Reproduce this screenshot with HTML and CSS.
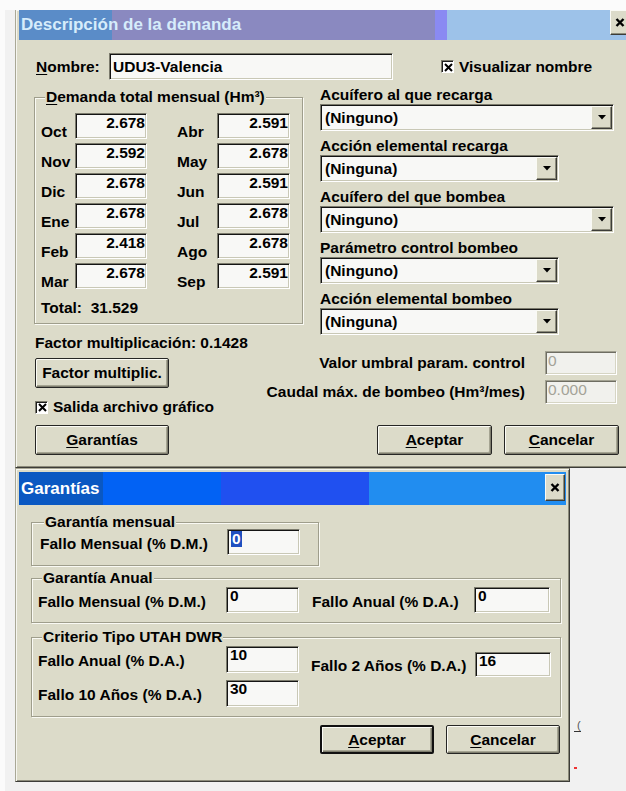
FILE: index.html
```html
<!DOCTYPE html>
<html lang="es">
<head>
<meta charset="utf-8">
<title>Descripción de la demanda</title>
<link rel="stylesheet" href="styles.css">
</head>
<body>
<div class="desk">

  <section class="dlg dlg-main">
    <header class="title title-main">
      <span class="title-text">Descripción de la demanda</span>
      <span class="close"><svg width="10" height="9" viewBox="0 0 10 9"><path d="M1.5 1L8.5 8M8.5 1L1.5 8" stroke="#000" stroke-width="2.4"/></svg></span>
    </header>

    <div class="main-body">
      <div class="name-row">
        <span class="name-lbl"><u>N</u>ombre:</span>
        <span class="field name-field">UDU3-Valencia</span>
        <span class="check check-name">
          <span class="box"><svg width="9" height="9" viewBox="0 0 9 9"><path d="M1 1L8 8M8 1L1 8" stroke="#000" stroke-width="2"/></svg></span>
          <span>Visualizar nombre</span>
        </span>
      </div>

      <div class="mid">
        <div class="group months">
          <span class="group-title"><u>D</u>emanda total mensual (Hm³)</span>
          <div class="month-grid">
            <span class="m">Oct</span><span class="field num">2.678</span><span class="m r">Abr</span><span class="field num">2.591</span>
            <span class="m">Nov</span><span class="field num">2.592</span><span class="m r">May</span><span class="field num">2.678</span>
            <span class="m">Dic</span><span class="field num">2.678</span><span class="m r">Jun</span><span class="field num">2.591</span>
            <span class="m">Ene</span><span class="field num">2.678</span><span class="m r">Jul</span><span class="field num">2.678</span>
            <span class="m">Feb</span><span class="field num">2.418</span><span class="m r">Ago</span><span class="field num">2.678</span>
            <span class="m">Mar</span><span class="field num">2.678</span><span class="m r">Sep</span><span class="field num">2.591</span>
          </div>
          <div class="total">Total:&nbsp; 31.529</div>
        </div>

        <div class="combos">
          <div class="c-lbl">Acuífero al que recarga</div>
          <div class="combo wide"><span class="c-val">(Ninguno)</span><span class="drop"><svg width="8" height="5" viewBox="0 0 8 5"><path d="M0 0H8L4 4.5Z"/></svg></span></div>
          <div class="c-lbl">Acción elemental recarga</div>
          <div class="combo"><span class="c-val">(Ninguna)</span><span class="drop"><svg width="8" height="5" viewBox="0 0 8 5"><path d="M0 0H8L4 4.5Z"/></svg></span></div>
          <div class="c-lbl">Acuífero del que bombea</div>
          <div class="combo wide"><span class="c-val">(Ninguno)</span><span class="drop"><svg width="8" height="5" viewBox="0 0 8 5"><path d="M0 0H8L4 4.5Z"/></svg></span></div>
          <div class="c-lbl">Parámetro control bombeo</div>
          <div class="combo"><span class="c-val">(Ninguno)</span><span class="drop"><svg width="8" height="5" viewBox="0 0 8 5"><path d="M0 0H8L4 4.5Z"/></svg></span></div>
          <div class="c-lbl">Acción elemental bombeo</div>
          <div class="combo"><span class="c-val">(Ninguna)</span><span class="drop"><svg width="8" height="5" viewBox="0 0 8 5"><path d="M0 0H8L4 4.5Z"/></svg></span></div>
        </div>
      </div>

      <div class="lower">
        <div class="lower-left">
          <div class="factor-text">Factor multiplicación: 0.1428</div>
          <button class="btn btn-factor">Factor multiplic.</button>
          <span class="check check-out">
            <span class="box"><svg width="9" height="9" viewBox="0 0 9 9"><path d="M1 1L8 8M8 1L1 8" stroke="#000" stroke-width="2"/></svg></span>
            <span>Salida archivo gráfico</span>
          </span>
        </div>
        <div class="lower-right">
          <div class="pair pair-1"><span>Valor umbral param. control</span><span class="field dis">0</span></div>
          <div class="pair pair-2"><span>Caudal máx. de bombeo (Hm³/mes)</span><span class="field dis">0.000</span></div>
        </div>
      </div>

      <div class="actions">
        <button class="btn btn-gar"><u>G</u>arantías</button>
        <span class="spacer"></span>
        <button class="btn btn-ok"><u>A</u>ceptar</button>
        <button class="btn btn-cancel"><u>C</u>ancelar</button>
      </div>
    </div>
  </section>

  <section class="dlg dlg-gar">
    <header class="title title-gar">
      <span class="title-text">Garantías</span>
      <span class="close"><svg width="10" height="9" viewBox="0 0 10 9"><path d="M1.5 1L8.5 8M8.5 1L1.5 8" stroke="#000" stroke-width="2.4"/></svg></span>
    </header>

    <div class="gar-body">
      <div class="group g-month">
        <span class="group-title">Garantía mensual</span>
        <div class="g-row">
          <span class="g-lbl g-lbl-a">Fallo Mensual (% D.M.)</span>
          <span class="field g-field"><span class="sel">0</span></span>
        </div>
      </div>

      <div class="group g-year">
        <span class="group-title">Garantía Anual</span>
        <div class="g-row">
          <span class="g-lbl">Fallo Mensual (% D.M.)</span>
          <span class="field g-field">0</span>
          <span class="g-lbl g-lbl-r">Fallo Anual (% D.A.)</span>
          <span class="field g-field g-field-r">0</span>
        </div>
      </div>

      <div class="group g-utah">
        <span class="group-title">Criterio Tipo UTAH DWR</span>
        <div class="g-row g-row-top">
          <span class="g-pair">
            <span class="g-lbl">Fallo Anual (% D.A.)</span>
            <span class="field g-field g-tall">10</span>
          </span>
          <span class="g-pair g-pair-low">
            <span class="g-lbl g-lbl-r2">Fallo 2 Años (% D.A.)</span>
            <span class="field g-field g-field-r2">16</span>
          </span>
        </div>
        <div class="g-row g-row-2">
          <span class="g-lbl">Fallo 10 Años (% D.A.)</span>
          <span class="field g-field g-tall">30</span>
        </div>
      </div>

      <div class="gar-actions">
        <button class="btn btn-default"><u>A</u>ceptar</button>
        <button class="btn"><u>C</u>ancelar</button>
      </div>
    </div>
  </section>

  <span class="stray-mark">(</span>
  <span class="stray-dot"></span>
</div>
</body>
</html>
```
FILE: styles.css
```css
:root {
  --face: #dcdbc9;
  --shade: #9f9e8c;
  --field: #f8f8f6;
}

* { box-sizing: border-box; }

html, body { margin: 0; padding: 0; }

body {
  width: 626px;
  height: 791px;
  overflow: hidden;
  background: #fbfbfb;
  font: bold 15.5px/18px "Liberation Sans", Arial, sans-serif;
  color: #000;
}

u { text-decoration-thickness: 1px; text-underline-offset: 2px; }

/* grey desktop strip behind the dialogs */
.desk {
  position: relative;
  margin: 10px 0 0 5px;
  padding-left: 10px;
  height: 781px;
  background: #f1f1f1;
}

/* ---------- window frames ---------- */
.dlg {
  background: var(--face);
  padding: 3px;
  border: 1px solid #a9a896;
  border-right-color: #3c3c38;
  border-bottom-color: #3c3c38;
  box-shadow: inset 1px 1px 0 #f6f6f0, inset -1px -1px 0 #8c8b7a;
}

.dlg-main {
  width: 620px;
  padding-top: 0;
  border-top: 0;
}

.dlg-gar {
  width: 555px;
}

/* ---------- title bars ---------- */
.title {
  display: flex;
  align-items: flex-start;
  font-size: 17px;
  padding-left: 2px;
  white-space: nowrap;
}

.title-main {
  height: 30px;
  line-height: 30px;
  color: #d6ecfb;
  background: linear-gradient(to right,
    #5a8cc8 0 93px,
    #8a89c0 93px 416px,
    #8a8af2 416px 428px,
    #9dc2e9 428px);
}

.title-gar {
  height: 33px;
  line-height: 33px;
  color: #fff;
  background: linear-gradient(to right,
    #0a58c2 0 84px,
    #0262f4 84px 202px,
    #2050f0 202px 350px,
    #218df0 350px);
}

.title-text { flex: 1; }

.close {
  width: 20px;
  display: flex;
  align-items: center;
  justify-content: center;
  background: var(--face);
  border: 1px solid #3c3c38;
  border-top-color: #fafaf4;
  border-left-color: #fafaf4;
  box-shadow: inset -1px -1px 0 #8c8b7a;
}

.title-main .close { height: 25px; margin-right: 1px; }
.title-gar .close { height: 27px; margin: 2px 1px 0 0; }

/* ---------- shared controls ---------- */
.field {
  display: block;
  white-space: nowrap;
  background: var(--field);
  border: 1px solid;
  border-color: #7b7a6c #fff #fff #7b7a6c;
  box-shadow: inset 1px 1px 0 #141414, inset -1px -1px 0 #c9c8b6;
  padding: 1px 2px;
}

.btn {
  font: inherit;
  color: #000;
  background: var(--face);
  border: 1px solid #262624;
  border-radius: 2px;
  box-shadow: inset 1px 1px 0 #fbfbf5, inset -1px -1px 0 #7e7d6e, inset -2px -2px 0 #a5a492;
  padding: 0;
  height: 30px;
  white-space: nowrap;
}

.btn-default {
  border-width: 2px;
  border-color: #111;
}

.check {
  display: flex;
  align-items: center;
  white-space: nowrap;
}

.box {
  width: 13px;
  height: 13px;
  display: flex;
  align-items: center;
  justify-content: center;
  background: #fff;
  border: 1px solid;
  border-color: #7b7a6c #fff #fff #7b7a6c;
  box-shadow: inset 1px 1px 0 #1c1c1c;
  margin-right: 5px;
  padding: 1px 0 0 1px;
}

.group {
  border: 1px solid var(--shade);
  box-shadow: inset 1px 1px 0 #fafaf4, 1px 1px 0 #fafaf4;
}

.group-title {
  display: block;
  width: max-content;
  margin: -10px 0 0 4px;
  padding: 0 1px;
  background: var(--face);
  white-space: nowrap;
}

/* ---------- main dialog body ---------- */
.main-body {
  padding: 13px 14px 9px 15px;
}

.name-row {
  display: flex;
  align-items: center;
  height: 27px;
}

.name-lbl {
  width: 75px;
  padding-left: 2px;
}

.name-field {
  width: 284px;
  height: 27px;
  line-height: 21px;
  padding: 2px 3px 0;
}

.check-name { margin-left: 48px; }

.mid {
  display: flex;
  gap: 17px;
  margin-top: 6px;
}

.months {
  width: 269px;
  height: 227px;
  margin-top: 11px;
  padding: 0 0 0 6px;
}

.month-grid {
  display: grid;
  grid-template-columns: 34px 72px 70px 73px;
  grid-auto-rows: 26px;
  row-gap: 4px;
  margin-top: 7px;
  align-items: end;
}

.m { margin-bottom: -2px; }
.m.r { padding-left: 30px; }

.num {
  height: 26px;
  text-align: right;
  padding: 0 1px 0 0;
}

.total { margin-top: 10px; white-space: nowrap; }

.combos {
  width: 294px;
  white-space: nowrap;
}

.c-lbl { height: 18px; }

.combo {
  display: flex;
  width: 239px;
  height: 27px;
  margin-bottom: 6px;
  background: var(--field);
  border: 1px solid;
  border-color: #7b7a6c #fff #fff #7b7a6c;
  box-shadow: inset 1px 1px 0 #141414, inset -1px -1px 0 #c9c8b6;
  padding: 1px;
}

.combo.wide { width: 294px; }

.c-val {
  flex: 1;
  padding: 3px 0 0 3px;
  line-height: 18px;
}

.drop {
  width: 21px;
  height: 23px;
  display: flex;
  align-items: center;
  justify-content: center;
  background: var(--face);
  border: 1px solid #3c3c38;
  border-top-color: #fafaf4;
  border-left-color: #fafaf4;
  box-shadow: inset -1px -1px 0 #8c8b7a;
}

.lower {
  display: flex;
  margin-top: -7px;
}

.lower-left {
  width: 220px;
  padding-left: 1px;
  display: flex;
  flex-direction: column;
  align-items: flex-start;
  white-space: nowrap;
}

.btn-factor {
  width: 134px;
  margin-top: 6px;
}

.check-out { margin-top: 10px; height: 18px; }

.lower-right {
  flex: 1;
  display: flex;
  flex-direction: column;
  align-items: flex-end;
}

.pair {
  display: flex;
  align-items: center;
  gap: 20px;
  white-space: nowrap;
}

.pair-1 { margin-top: 17px; }
.pair-2 { margin-top: 5px; }

.dis {
  width: 72px;
  height: 24px;
  line-height: 16px;
  background: #f1f1ed;
  color: #a4a398;
  font-weight: normal;
  border-color: #a3a292 #fff #fff #a3a292;
  box-shadow: inset 1px 1px 0 #6e6d62, inset -1px -1px 0 #d6d5c4;
}

.actions {
  display: flex;
  margin-top: 9px;
}

.spacer { flex: 1; }

.btn-gar { width: 134px; margin-left: 1px; }
.btn-ok { width: 115px; }
.btn-cancel { width: 115px; margin-left: 12px; margin-right: -2px; }

/* ---------- guarantees dialog ---------- */
.gar-body {
  padding: 17px 5px 24px 12px;
}

.g-row {
  display: flex;
  align-items: center;
  white-space: nowrap;
}

.g-month {
  width: 288px;
  padding: 0 0 10px 8px;
}

.g-month .g-row { margin-top: -2px; }

.g-lbl { padding-top: 3px; }
.g-lbl-a { width: 187px; }

.g-field {
  width: 73px;
  height: 26px;
  line-height: 14px;
  padding: 1px 3px;
}

.sel {
  display: inline-block;
  background: #1f4fbf;
  color: #fff;
  line-height: 16px;
  padding: 0 1px;
}

.g-year {
  margin-top: 12px;
  padding: 0 0 9px 6px;
}

.g-year .g-lbl:first-child,
.g-utah .g-lbl { width: 188px; }

.g-lbl-r { width: 162px; margin-left: 13px; }
.g-field-r { width: 76px; }

.g-utah {
  margin-top: 14px;
  padding: 0 0 9px 6px;
}

.g-row-top { align-items: flex-start; }

.g-pair {
  display: flex;
  align-items: center;
}

.g-pair-low { margin-top: 6px; }

.g-utah .g-lbl-r2 { width: 164px; margin-left: 12px; }

.g-tall { height: 27px; }
.g-field-r2 { width: 76px; height: 25px; }

.g-row-2 { margin-top: 3px; }

.gar-actions {
  display: flex;
  justify-content: flex-end;
  gap: 12px;
  margin: 8px 1px 0 0;
}

.gar-actions .btn { width: 114px; height: 29px; }

/* bits of the desktop showing past the window edge */
.stray-mark {
  position: absolute;
  left: 569px;
  top: 709px;
  font: normal 11px/12px "Liberation Sans", Arial, sans-serif;
  color: #555;
  border-bottom: 1px solid #333;
  padding-left: 3px;
}

.stray-dot {
  position: absolute;
  left: 569px;
  top: 757px;
  width: 3px;
  height: 2px;
  background: #e33;
}
```
